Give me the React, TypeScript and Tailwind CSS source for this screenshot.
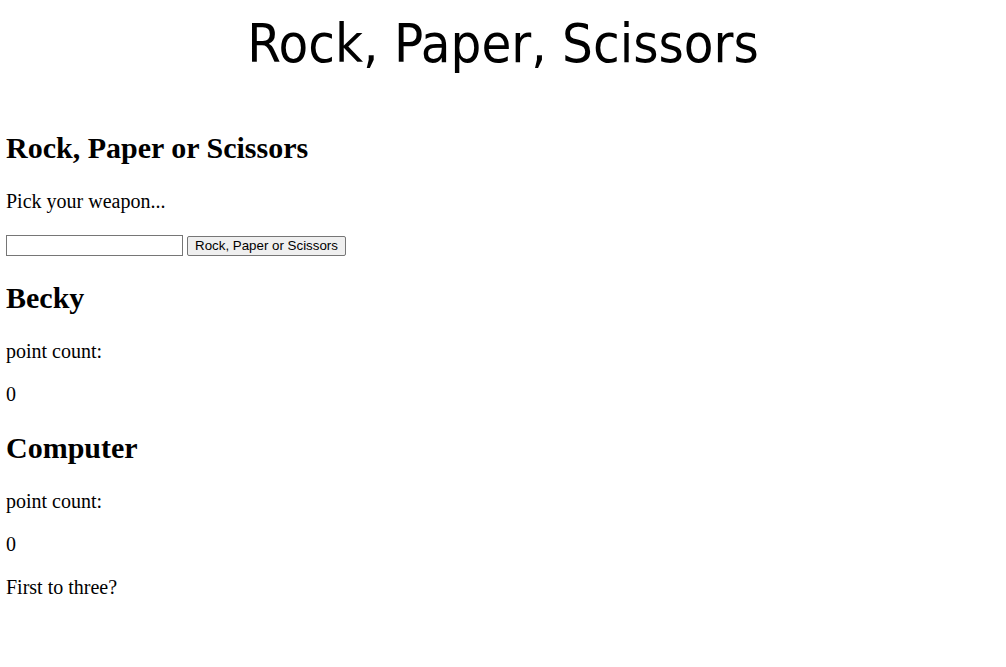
export default function App() {
  return (
    <div className="min-h-screen bg-white px-[6px] font-['Liberation_Serif',serif] text-[20px] text-black">
      <header className="h-[106px] pt-[12px]">
        <h1 className="text-center font-['DejaVu_Sans_Condensed','DejaVu_Sans',sans-serif] text-[54px] font-normal leading-[63px]">
          Rock, Paper, Scissors
        </h1>
      </header>

      <h2 className="mt-[25px] mb-[25px] text-[30px] font-bold leading-[34px]">Rock, Paper or Scissors</h2>
      <p className="my-[20px] leading-[23px]">Pick your weapon...</p>

      <form className="flex h-[23px] items-start gap-[4px]" onSubmit={(e) => e.preventDefault()}>
        <input
          type="text"
          className="mt-[2px] h-[21px] w-[177px] border border-[#767676] bg-white px-[2px] font-['Liberation_Sans',sans-serif] text-[13.33px] outline-none"
        />
        <button
          type="submit"
          className="mt-[3px] h-[20px] w-[159px] rounded-[2px] border border-[#767676] bg-[#efefef] font-['Liberation_Sans',sans-serif] text-[13.33px] leading-[18px] text-black"
        >
          Rock, Paper or Scissors
        </button>
      </form>

      <h2 className="mt-[25px] mb-[25px] text-[30px] font-bold leading-[34px]">Becky</h2>
      <p className="my-[20px] leading-[23px]">point count:</p>
      <p className="my-[20px] leading-[23px]">0</p>

      <h2 className="mt-[25px] mb-[25px] text-[30px] font-bold leading-[34px]">Computer</h2>
      <p className="my-[20px] leading-[23px]">point count:</p>
      <p className="my-[20px] leading-[23px]">0</p>
      <p className="my-[20px] leading-[23px]">First to three?</p>
    </div>
  )
}
